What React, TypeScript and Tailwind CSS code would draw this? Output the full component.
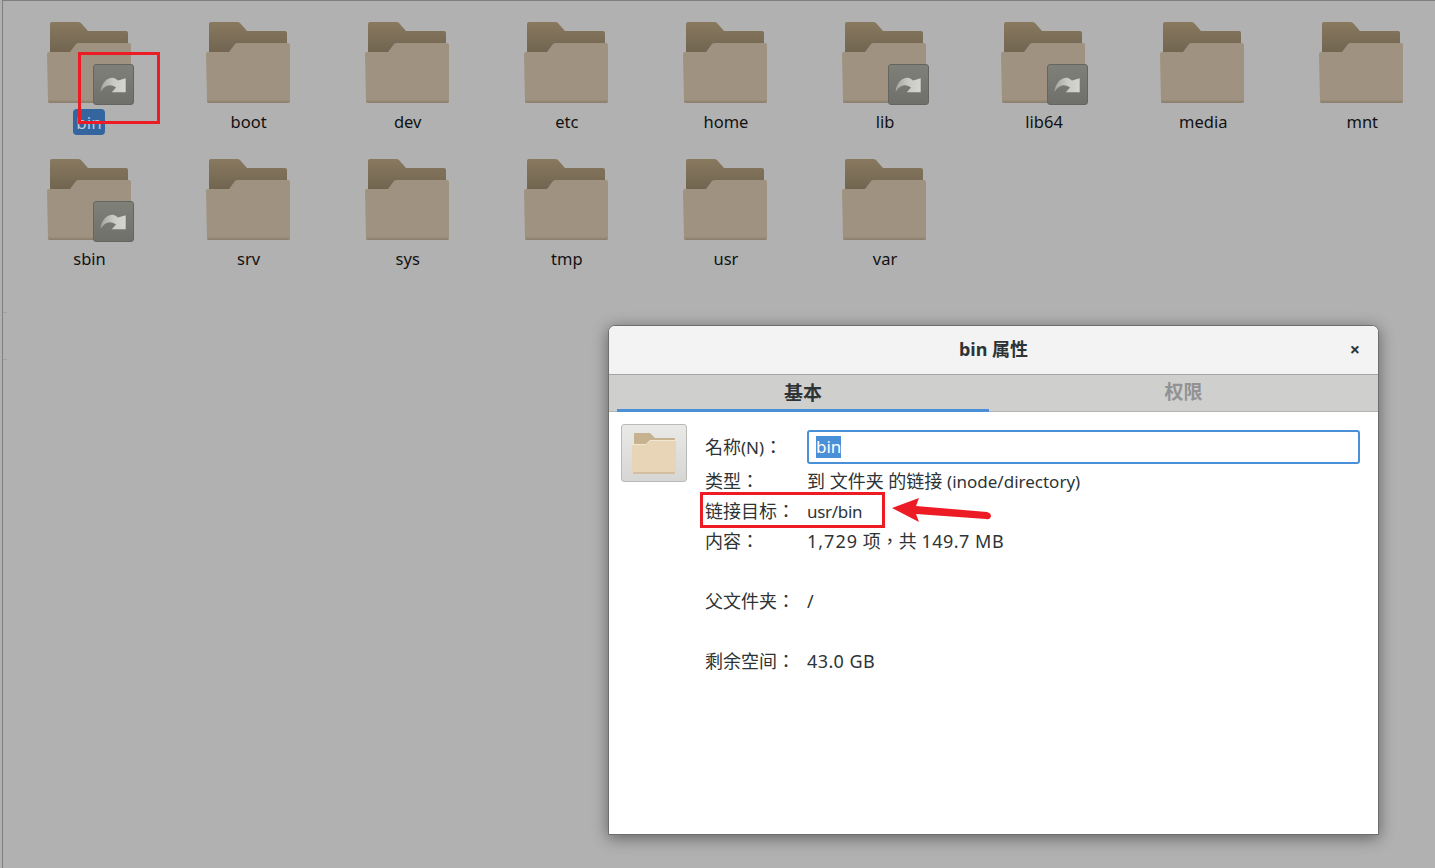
import type { ReactNode } from "react"

const UI_FONT = "font-['Noto_Sans','Noto_Sans_CJK_TC',sans-serif]"

const row1 = ["bin", "boot", "dev", "etc", "home", "lib", "lib64", "media", "mnt"]
const row2 = ["sbin", "srv", "sys", "tmp", "usr", "var"]
const links = ["bin", "lib", "lib64", "sbin"]

const FolderIcon = () => (
  <svg width="84" height="82" viewBox="0 0 84 82" className="block">
    <defs>
      <linearGradient id="back" x1="0" y1="0" x2="0" y2="1">
        <stop offset="0" stopColor="#88795f" />
        <stop offset="1" stopColor="#6e624e" />
      </linearGradient>
      <linearGradient id="lip" x1="0" y1="0" x2="0" y2="1">
        <stop offset="0" stopColor="#9c8f7c" />
        <stop offset="1" stopColor="#8a7d6b" />
      </linearGradient>
    </defs>
    <path d="M3 2q0-2 2-2h26q2 0 3 1l7 8h38q2 0 2 2v24H3z" fill="url(#back)" />
    <path d="M0 32q0-2 2-2h21l6-8q1-1 3-1h50q2 0 2 2v56q0 2-2 2H3q-2 0-2-2z" fill="#a09280" />
    <path d="M1 78h83v1q0 2-2 2H3q-2 0-2-2z" fill="url(#lip)" />
  </svg>
)

const LinkBadge = () => (
  <div className="absolute left-[46px] top-[42px] h-[41px] w-[41px] overflow-hidden rounded-[3px] border border-[#64655e] bg-gradient-to-b from-[#7f8078] to-[#6f706a]">
    <svg width="39" height="39" viewBox="1 1 39 39" className="block">
      <defs>
        <linearGradient id="arrow" x1="0" y1="0" x2="1" y2="0">
          <stop offset="0" stopColor="#a3a49e" />
          <stop offset="0.5" stopColor="#c9cac4" />
          <stop offset="1" stopColor="#d6d6d1" />
        </linearGradient>
      </defs>
      <path d="M7.5 28C8.5 18 15 13 21 14Q23 14.5 25 16.5L32.7 14.3V28.3H18.7L23 23.5C17 19.5 12 20.5 7.5 28Z" fill="url(#arrow)" />
    </svg>
  </div>
)

const FileItem = ({ name }: { name: string }) => {
  const selected = name === "bin"
  return (
    <div className="flex h-[137px] w-[159.1px] shrink-0 flex-col items-center">
      <div className="relative mt-[21px] h-[82px] w-[84px]">
        <FolderIcon />
        {links.includes(name) && <LinkBadge />}
      </div>
      <div
        className={
          selected
            ? "ml-[1px] mt-[5px] flex h-[26px] w-[32px] items-center justify-center rounded-[4px] bg-[#34659f] text-[17px] leading-[25px] text-[#b9c8da]"
            : "mt-[4px] h-[27px] pl-[2px] text-[16.5px] leading-[27px] text-[#111111]"
        }>
        {name}
      </div>
    </div>
  )
}

// Latin runs sit a little smaller than the CJK around them
const Lat = ({ children, className = "" }: { children: ReactNode; className?: string }) => (
  <span className={`text-[17px] ${className}`}>{children}</span>
)

const InfoRow = ({ label, children }: { label: string; children: ReactNode }) => (
  <div className="flex h-[30px] items-center text-[18px] text-[#2e3436]">
    <div className="w-[102px] whitespace-nowrap">{label}</div>
    <div className="whitespace-pre">{children}</div>
  </div>
)

const PropertiesDialog = () => (
  <div className="absolute left-[608px] top-[325px] flex h-[510px] w-[771px] flex-col overflow-hidden rounded-t-[7px] border border-[#6e6e6e] bg-white shadow-[0_3px_16px_rgba(0,0,0,0.45)]">
    {/* Title bar */}
    <div className="relative flex h-[49px] shrink-0 items-center justify-center border-b border-[#a5a5a3] bg-[#f3f3f3] pb-[2px]">
      <span className="text-[18px] font-bold text-[#2e3436]">bin 属性</span>
      <span className="absolute right-[18px] top-[13px] text-[18px] font-bold leading-[20px] text-[#2e3436]">×</span>
    </div>
    {/* Tabs */}
    <div className="flex h-[37px] shrink-0 border-b border-[#b5b5b3] bg-[#cfcfcd] pl-[8px] text-[19px] font-bold">
      <div className="flex h-[37px] w-[372px] items-center justify-center border-b-[3px] border-[#4a90d9] pt-[2px] text-[#2e3436]">基本</div>
      <div className="flex h-[36px] flex-1 items-center justify-center pb-[1px] text-[#929292]">权限</div>
    </div>
    {/* Basic tab */}
    <div className="flex flex-1 pl-[12px] pr-[18px] pt-[12px]">
      <div className="flex h-[58px] w-[66px] shrink-0 items-center justify-center rounded-[3px] border border-[#b9b9b6] bg-gradient-to-b from-[#e9e9e7] to-[#d6d6d4]">
        <svg width="44" height="44" viewBox="0 0 44 44">
          <path d="M2 3q0-1 1-1h15l5 5h19q1 0 1 1v14H2z" fill="#c7b290" />
          <path d="M0 14q0-1 1-1h13l4-4h25q1 0 1 1v31q0 1-1 1H1q-1 0-1-1z" fill="#f3e6d2" />
          <path d="M0 15q0-1 1-1h13l4-4h25q1 0 1 1v30q0 1-1 1H1q-1 0-1-1z" fill="#e8d5b8" />
          <path d="M1 41h42v1q0 1-1 1H2q-1 0-1-1z" fill="#d3bf9f" />
        </svg>
      </div>
      <div className="ml-[18px] flex flex-1 flex-col pt-[6px]">
        <div className="mb-[2px] flex h-[34px] items-center text-[18px] text-[#2e3436]">
          <div className="w-[102px] whitespace-nowrap">
            名称<Lat>(N)</Lat>：
          </div>
          <div className="flex h-[34px] flex-1 items-center rounded-[3px] border-2 border-[#4a90d9] pl-[7px]">
            <span className="bg-[#4a90d9] text-[17px] leading-[22px] text-white">bin</span>
          </div>
        </div>
        <InfoRow label="类型：">
          到 文件夹 的链接 <Lat>(inode/directory)</Lat>
        </InfoRow>
        <InfoRow label="链接目标：">
          <Lat className="tracking-[-0.3px]">usr/bin</Lat>
        </InfoRow>
        <InfoRow label="内容：">
          <span className="tracking-[1px]">1,729</span> 项，共 <span className="tracking-[0.5px]">149.7 MB</span>
        </InfoRow>
        <div className="h-[30px]" />
        <InfoRow label="父文件夹：">/</InfoRow>
        <div className="h-[30px]" />
        <InfoRow label="剩余空间：">
          <span className="tracking-[0.4px]">43.0 GB</span>
        </InfoRow>
      </div>
    </div>
  </div>
)

export default function App() {
  return (
    <div className={`relative h-[868px] w-[1435px] overflow-hidden bg-[#b1b1b1] pl-[2px] ${UI_FONT}`}>
      <div className="h-full border-l border-t border-[#7f7f7f] pl-[6px]">
        <div className="flex">
          {row1.map((name) => (
            <FileItem key={name} name={name} />
          ))}
        </div>
        <div className="flex">
          {row2.map((name) => (
            <FileItem key={name} name={name} />
          ))}
        </div>
      </div>

      {/* Faint ticks on the side pane edge */}
      <div className="absolute left-[3px] top-[312px] h-px w-[4px] bg-[#a2a2a2]" />
      <div className="absolute left-[3px] top-[359px] h-px w-[4px] bg-[#a2a2a2]" />

      <PropertiesDialog />

      {/* Red annotations */}
      <div className="absolute left-[78px] top-[52px] h-[72px] w-[82px] border-[3px] border-[#ed1c24]" />
      <div className="absolute left-[700px] top-[492px] h-[36px] w-[185px] border-[3px] border-[#ed1c24]" />
      <svg className="absolute left-[885px] top-[492px]" width="115" height="36" viewBox="0 0 115 36">
        <path d="M7 16L34 6 31 14 102 20Q106 21 106 24 105 28 101 27L31 22 34 30Z" fill="#ed1c24" />
      </svg>
    </div>
  )
}
